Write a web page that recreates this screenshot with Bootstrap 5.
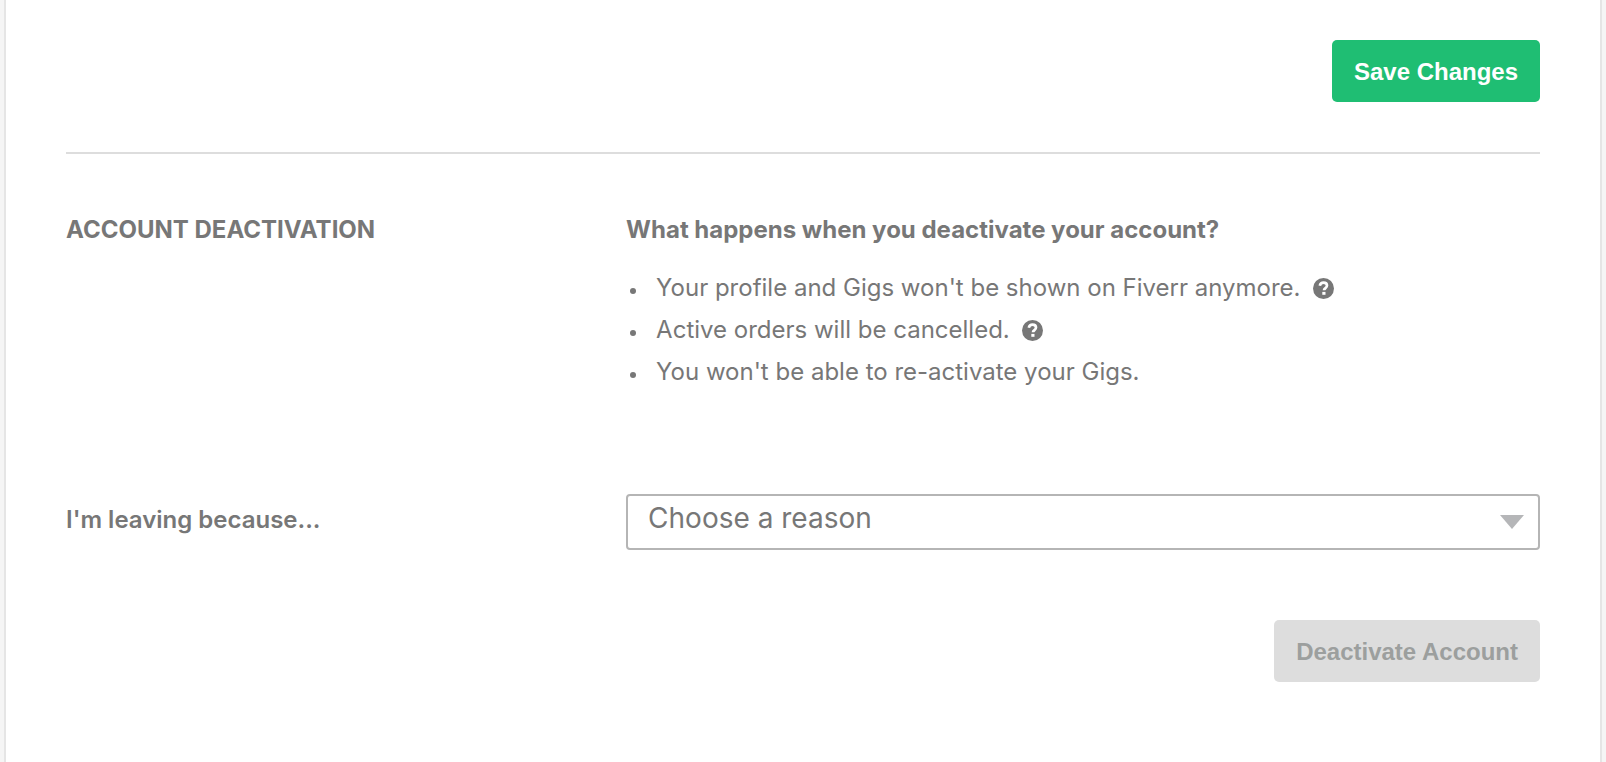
<!DOCTYPE html>
<html lang="en">
<head>
<meta charset="utf-8">
<meta name="viewport" content="width=device-width, initial-scale=1">
<title>Account settings</title>
<link href="https://cdn.jsdelivr.net/npm/bootstrap@5.3.0/dist/css/bootstrap.min.css" rel="stylesheet">
<style>
  body {
    background: #f5f5f5;
    color: #777;
    font-family: "Inter", "Liberation Sans", sans-serif;
    font-size: 24px;
    line-height: 36px;
  }
  .settings-panel {
    min-height: 100vh;
    margin: 0 4px;
    padding: 40px 60px 80px;
    background: #fff;
    border: solid #e5e5e5;
    border-width: 0 2px;
  }
  .btn-settings {
    height: 62px;
    padding: 2px 22px 0;
    border: 0;
    border-radius: 5px;
    font: bold 24px/60px "Liberation Sans", sans-serif;
  }
  .btn-save, .btn-save:hover { background: #1fbe73; color: #fff; }
  .btn-deactivate:disabled { background: #ddd; color: #9c9f9e; opacity: 1; }
  .section-rule { margin: 50px 0 0; border-top: 2px solid #ddd; opacity: 1; }
  .settings-row { padding-top: 58px; }
  .side-label { flex: 0 0 38%; }
  .section-title { font-size: 24px; font-weight: 700; line-height: 36px; }
  .reason-label { padding-bottom: 4px; font-weight: 600; }
  .fact-list { margin: 19px 0 0; padding: 0; list-style: none; line-height: 42px; }
  .fact-list li { display: flex; align-items: center; }
  .fact-list li::before {
    content: "";
    flex: none;
    width: 6px;
    height: 6px;
    margin: 6px 20px 0 4px;
    border-radius: 50%;
    background: #777;
  }
  .help-button { margin-left: 12px; padding: 0; border: 0; background: none; color: #777; display: flex; }
  .reason-row { padding-top: 101px; }
  .reason-select {
    height: 56px;
    padding: 0 60px 8px 20px;
    border: 2px solid #b5b5b5;
    border-radius: 4px;
    color: #777;
    font-size: 28px;
    line-height: 42px;
    background: #fff url("data:image/svg+xml,%3Csvg xmlns='http://www.w3.org/2000/svg' viewBox='0 0 24 14'%3E%3Cpath d='M0 0h24L12 14z' fill='%23b5b6b8'/%3E%3C/svg%3E") no-repeat right 14px top 19px / 24px 14px;
  }
  .deactivate-row { padding-top: 70px; }
</style>
</head>
<body>
<main class="settings-panel">
  <div class="d-flex justify-content-end">
    <button type="button" class="btn btn-settings btn-save">Save Changes</button>
  </div>
  <hr class="section-rule">
  <section class="settings-row d-flex">
    <h2 class="side-label section-title mb-0">ACCOUNT DEACTIVATION</h2>
    <div class="flex-grow-1">
      <h3 class="section-title mb-0">What happens when you deactivate your account?</h3>
      <ul class="fact-list">
        <li>Your profile and Gigs won't be shown on Fiverr anymore.
          <button type="button" class="help-button" aria-label="More about your profile and Gigs"><svg width="21" height="21" viewBox="0 0 21 21" aria-hidden="true"><circle cx="10.500" cy="10.500" r="10.500" fill="currentColor"/><path d="M6.800 7.700C7.300 5.600 8.600 4.700 10.500 4.700c2.100 0 3.500 1.100 3.500 2.900 0 2.500-3 2.400-3 4.700" fill="none" stroke="#fff" stroke-width="2.700"/><path d="M9.300 13.900h3.200v2.900H9.300z" fill="#fff"/></svg></button></li>
        <li>Active orders will be cancelled.
          <button type="button" class="help-button" aria-label="More about active orders"><svg width="21" height="21" viewBox="0 0 21 21" aria-hidden="true"><circle cx="10.500" cy="10.500" r="10.500" fill="currentColor"/><path d="M6.800 7.700C7.300 5.600 8.600 4.700 10.500 4.700c2.100 0 3.500 1.100 3.500 2.900 0 2.500-3 2.400-3 4.700" fill="none" stroke="#fff" stroke-width="2.700"/><path d="M9.300 13.900h3.200v2.900H9.300z" fill="#fff"/></svg></button></li>
        <li>You won't be able to re-activate your Gigs.</li>
      </ul>
    </div>
  </section>
  <div class="reason-row d-flex align-items-center">
    <label class="side-label reason-label" for="reason">I'm leaving because...</label>
    <select id="reason" class="form-select reason-select">
      <option>Choose a reason</option>
    </select>
  </div>
  <div class="deactivate-row d-flex justify-content-end">
    <button type="button" class="btn btn-settings btn-deactivate" disabled>Deactivate Account</button>
  </div>
</main>
<script src="https://cdn.jsdelivr.net/npm/bootstrap@5.3.0/dist/js/bootstrap.bundle.min.js"></script>
</body>
</html>
